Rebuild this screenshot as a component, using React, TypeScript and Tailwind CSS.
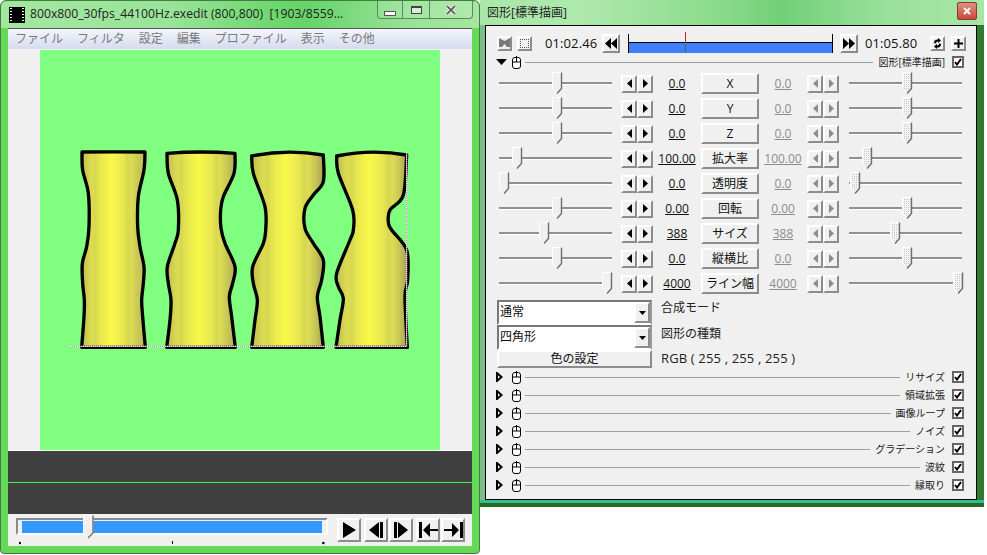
import React from "react";

const sans = "font-['Open_Sans','Noto_Sans_CJK_JP',sans-serif]";
const raised = "border-2 border-t-white border-l-white border-r-[#8c8c8c] border-b-[#8c8c8c] bg-[#f0f0f0]";

// contour of the vases, read off the reference (zoomed coords)
const vases: { left: number[][]; right: number[][]; fill: string; sag: number }[] = [
  {
    left: [[66, 36], [68, 90], [85, 160], [87, 260], [80, 320], [67, 370], [68, 430], [73, 480], [72, 530], [65, 622]],
    right: [[255, 36], [252, 90], [235, 170], [233, 260], [240, 320], [252, 380], [250, 430], [245, 480], [248, 530], [256, 622]],
    fill: "url(#vaseA)",
    sag: 35,
  },
  {
    left: [[321, 40], [325, 100], [352, 180], [355, 270], [345, 310], [322, 380], [325, 430], [333, 480], [330, 540], [320, 622]],
    right: [[525, 40], [522, 100], [490, 170], [482, 210], [483, 265], [495, 310], [525, 380], [518, 430], [508, 470], [515, 530], [526, 622]],
    fill: "url(#vaseB)",
    sag: 32,
  },
  {
    left: [[575, 48], [580, 100], [615, 200], [617, 270], [610, 310], [578, 380], [580, 430], [592, 480], [585, 540], [575, 622]],
    right: [[790, 45], [790, 125], [760, 165], [735, 205], [735, 265], [760, 310], [790, 360], [785, 420], [772, 470], [780, 530], [790, 622]],
    fill: "url(#vaseC)",
    sag: 26,
  },
  {
    left: [[830, 48], [835, 100], [878, 210], [880, 270], [870, 300], [830, 400], [835, 440], [850, 475], [840, 540], [828, 622]],
    right: [[1040, 45], [1030, 165], [990, 210], [985, 245], [995, 270], [1040, 330], [1043, 420], [1035, 470], [1042, 622]],
    fill: "url(#vaseD)",
    sag: 26,
  },
];

function smooth(pts: number[][]) {
  let d = "";
  for (let i = 0; i < pts.length - 1; i++) {
    const p0 = pts[Math.max(i - 1, 0)];
    const p1 = pts[i];
    const p2 = pts[i + 1];
    const p3 = pts[Math.min(i + 2, pts.length - 1)];
    const c1 = [p1[0] + (p2[0] - p0[0]) / 6, p1[1] + (p2[1] - p0[1]) / 6];
    const c2 = [p2[0] - (p3[0] - p1[0]) / 6, p2[1] - (p3[1] - p1[1]) / 6];
    d += `C${c1[0]} ${c1[1]} ${c2[0]} ${c2[1]} ${p2[0]} ${p2[1]}`;
  }
  return d;
}

function vasePath(left: number[][], right: number[][], sag: number) {
  const mid = (right[0][0] + left[0][0]) / 2;
  const bottom = left[left.length - 1];
  return `M${left[0][0]} ${left[0][1]}Q${mid} ${sag} ${right[0][0]} ${right[0][1]}` +
    smooth(right) + `L${bottom[0]} ${bottom[1]}` + smooth([...left].reverse()) + "Z";
}

function Grad({ id, end }: { id: string; end: string }) {
  return (
    <linearGradient id={id} x1="0" x2="1" y1="0" y2="0">
      <stop offset="0" stopColor="#bcbc55" />
      <stop offset="0.1" stopColor="#d2d250" />
      <stop offset="0.16" stopColor="#dcdc52" />
      <stop offset="0.22" stopColor="#d8d850" />
      <stop offset="0.3" stopColor="#e8e84e" />
      <stop offset="0.36" stopColor="#eeee4c" />
      <stop offset="0.46" stopColor="#f8f84a" />
      <stop offset="0.56" stopColor="#f0f04e" />
      <stop offset="0.66" stopColor="#e6e650" />
      <stop offset="0.72" stopColor="#d8d850" />
      <stop offset="0.78" stopColor="#dcdc54" />
      <stop offset="0.86" stopColor="#cccc55" />
      <stop offset="1" stopColor={end} />
    </linearGradient>
  );
}

function Vases() {
  return (
    <svg width="400" height="400" viewBox="-60 -270 1200 1200" className="block">
      <defs>
        <Grad id="vaseA" end="#bcbc58" />
        <Grad id="vaseB" end="#b0ae58" />
        <Grad id="vaseC" end="#a6a058" />
        <Grad id="vaseD" end="#a09a58" />
      </defs>
      {vases.map((v, i) => (
        <path key={i} d={vasePath(v.left, v.right, v.sag)} fill={v.fill} stroke="#000" strokeWidth="10" strokeLinejoin="round" />
      ))}
      <path d="M27 619H1040V40" fill="none" stroke="#d080c8" strokeWidth="3" />
      <path d="M27 619H1040V40" fill="none" stroke="#fff" strokeWidth="3" strokeDasharray="3 3" />
    </svg>
  );
}

function Btn({ className, children }: { className: string; children?: React.ReactNode }) {
  return <div className={`flex items-center justify-center ${raised} ${className}`}>{children}</div>;
}

function Tri({ d, w = 12, h = 12, fill = "#000" }: { d: string; w?: number; h?: number; fill?: string }) {
  return (
    <svg width={w} height={h} viewBox={`0 0 ${w} ${h}`}>
      <path d={d} fill={fill} />
    </svg>
  );
}

function Arrows({ off }: { off?: boolean }) {
  const c = off ? "#8c8c8c" : "#000";
  return (
    <div className="flex w-[32px] shrink-0">
      <Btn className="w-[16px] h-[18px]"><Tri w={5} h={9} d="M5 0V9L0 4.5Z" fill={c} /></Btn>
      <Btn className="w-[16px] h-[18px]"><Tri w={5} h={9} d="M0 0V9L5 4.5Z" fill={c} /></Btn>
    </div>
  );
}

function Slider({ pos, off }: { pos: number; off?: boolean }) {
  return (
    <div className="relative w-[113px] h-[23px] shrink-0">
      <div className="absolute left-0 right-0 top-[10px] h-[3px] bg-[#909090] border-b border-white" />
      <svg className="absolute top-0" style={{ left: pos }} width="11" height="23" viewBox="0 0 11 23">
        <defs>
          <pattern id="dither" width="2" height="2" patternUnits="userSpaceOnUse">
            <rect width="2" height="2" fill="#f4f4f4" />
            <rect width="1" height="1" fill="#c8c8c8" />
          </pattern>
        </defs>
        <path d="M0.5 0.5H9.5V16.5L5 21.5L0.5 16.5Z" fill={off ? "url(#dither)" : "#f0f0f0"} stroke="#fff" />
        <path d="M9.5 0.5V16.5L5 21.5" fill="none" stroke="#6e6e6e" strokeWidth="1.4" />
      </svg>
    </div>
  );
}

const rows = [
  { pos: 53, rpos: 53, val: "0.0", name: "X" },
  { pos: 53, rpos: 53, val: "0.0", name: "Y" },
  { pos: 53, rpos: 53, val: "0.0", name: "Z" },
  { pos: 13, rpos: 13, val: "100.00", name: "拡大率" },
  { pos: 0, rpos: 1, val: "0.0", name: "透明度" },
  { pos: 53, rpos: 53, val: "0.00", name: "回転" },
  { pos: 40, rpos: 41, val: "388", name: "サイズ" },
  { pos: 53, rpos: 53, val: "0.0", name: "縦横比" },
  { pos: 103, rpos: 104, val: "4000", name: "ライン幅" },
];

const sections = ["リサイズ", "領域拡張", "画像ループ", "ノイズ", "グラデーション", "波紋", "縁取り"];

function Mouse() {
  return (
    <svg width="10" height="13" viewBox="0 0 10 13" className="ml-[5px] shrink-0">
      <rect x="0.5" y="1.5" width="8" height="11" rx="2.5" fill="#fff" stroke="#000" />
      <path d="M4.5 0V6M0.5 6H8.5" stroke="#000" fill="none" />
    </svg>
  );
}

function Check() {
  return (
    <div className="ml-[7px] w-[12px] h-[12px] shrink-0 border-2 border-[#666] bg-white flex items-center justify-center">
      <svg width="8" height="8" viewBox="0 0 8 8">
        <path d="M1 4L3 6.5L7 1" fill="none" stroke="#000" strokeWidth="2" />
      </svg>
    </div>
  );
}

function Section({ label, open }: { label: string; open?: boolean }) {
  return (
    <div className="flex items-center h-[18px] pl-[9px] pr-[12px]">
      <div className="w-[12px] shrink-0 flex justify-center">
        {open ? (
          <Tri w={11} h={6} d="M0 0H11L5.5 6Z" />
        ) : (
          <svg width="7" height="10" viewBox="0 0 7 10" className="mr-[4px]">
            <path d="M1 1V9L5.5 5Z" fill="#f0f0f0" stroke="#000" strokeWidth="2" />
          </svg>
        )}
      </div>
      <Mouse />
      <div className="ml-[3px] flex-1 h-[1px] bg-[#a0a0a0]" />
      <span className="ml-[5px] text-[10px] leading-none text-[#222] whitespace-nowrap">{label}</span>
      <Check />
    </div>
  );
}

function Select({ text }: { text: string }) {
  return (
    <div className="flex w-[155px] h-[25px] border-2 border-t-[#777] border-l-[#777] border-r-[#999] border-b-white bg-white">
      <span className="flex-1 pl-[1px] text-[12px] leading-[20px] text-[#111]">{text}</span>
      <Btn className="w-[16px]"><Tri w={7} h={4} d="M0 0H7L3.5 4Z" /></Btn>
    </div>
  );
}

function PlayerButtons() {
  return (
    <div className="flex ml-[9px] mt-[4px]">
      <Btn className="w-[24px] h-[24px]"><Tri w={14} h={16} d="M1 0V16L14 8Z" /></Btn>
      <Btn className="w-[24px] h-[24px] ml-[3px]"><Tri w={14} h={16} d="M10 0V16L0 8ZM11 0H14V16H11Z" /></Btn>
      <Btn className="w-[24px] h-[24px] ml-[1px]"><Tri w={14} h={16} d="M0 0H3V16H0ZM4 0V16L14 8Z" /></Btn>
      <Btn className="w-[24px] h-[24px] ml-[3px]"><Tri w={19} h={16} d="M0 0H3V16H0ZM4 8L11 1V7H19V9H11V15Z" /></Btn>
      <Btn className="w-[24px] h-[24px] ml-[1px]"><Tri w={19} h={16} d="M16 0H19V16H16ZM15 8L8 1V7H0V9H8V15Z" /></Btn>
    </div>
  );
}

function LeftWindow() {
  return (
    <div className="flex flex-col w-[480px] h-[554px] shrink-0 rounded-t-[6px] rounded-b-[4px] border border-[#3f7f3f] bg-[#66d858]">
      <div className="relative flex items-center h-[27px] shrink-0 pl-[8px] rounded-t-[6px] bg-[linear-gradient(90deg,#a4e6a0_0%,#9ae49a_35%,#6cd66c_58%,#66d468_64%,#98e298_85%,#a6e6a2_100%)]">
        <svg width="16" height="16" viewBox="0 0 16 16" className="shrink-0">
          <rect width="16" height="16" fill="#000" />
          <path d="M1 1.5H3M1 4.5H3M1 7.5H3M1 10.5H3M1 13.5H3M13 1.5H15M13 4.5H15M13 7.5H15M13 10.5H15M13 13.5H15" stroke="#fff" />
        </svg>
        <span className="ml-[5px] text-[12.2px] text-[#222] whitespace-pre">800x800_30fps_44100Hz.exedit (800,800)  [1903/8559...</span>
        <div className="absolute top-0 left-[376px] flex w-[96px] h-[18px] border border-t-0 border-[#5a8a5a] rounded-b-[4px] bg-white/10">
          <div className="flex w-[25px] items-center justify-center border-r border-[#5a8a5a]">
            <div className="w-[12px] h-[5px] mt-[7px] border border-[#555] bg-white" />
          </div>
          <div className="flex w-[27px] items-center justify-center border-r border-[#5a8a5a]">
            <div className="w-[11px] h-[8px] border border-t-2 border-[#444] bg-white/50" />
          </div>
          <div className="flex flex-1 items-center justify-center">
            <svg width="12" height="10" viewBox="0 0 12 10">
              <path d="M2 1L10 9M10 1L2 9" stroke="#fff" strokeWidth="3.5" />
              <path d="M2 1L10 9M10 1L2 9" stroke="#666" strokeWidth="2" />
            </svg>
          </div>
        </div>
      </div>
      <div className="flex flex-col mx-[7px] h-[518px] border-t border-[#555] bg-[#f0f0f0]">
        <div className="flex gap-[14px] h-[20px] shrink-0 pl-[7px] items-center text-[12px] text-[#7a7a7a] bg-[linear-gradient(180deg,#f4f6fc,#d6dbef)]">
          {["ファイル", "フィルタ", "設定", "編集", "プロファイル", "表示", "その他"].map((m) => (
            <span key={m}>{m}</span>
          ))}
        </div>
        <div className="h-[402px] shrink-0 pt-[1px] border-b border-white">
          <div className="mx-auto w-[400px] h-[400px] bg-[#80ff80]">
            <Vases />
          </div>
        </div>
        <div className="flex flex-col justify-center h-[63px] shrink-0 bg-[#404040]">
          <div className="h-[1px] mb-[1px] bg-[#33ff33]" />
        </div>
        <div className="flex flex-1 items-start pl-[8px]">
          <div className="relative mt-[4px] w-[312px] h-[17px] border-2 border-t-[#8c8c8c] border-l-[#8c8c8c] border-r-white border-b-white p-[1px] px-[4px]">
            <div className="h-[12px] bg-[#3399ff]" />
            <svg className="absolute left-[65px] top-[-5px]" width="11" height="24" viewBox="0 0 11 24">
              <path d="M0.5 0.5H10V18L5 23L0.5 18Z" fill="#f0f0f0" stroke="#fff" />
              <path d="M10 0.5V18L5 23" fill="none" stroke="#6e6e6e" strokeWidth="1.4" />
            </svg>
            <svg className="absolute left-[1px] top-[21px]" width="310" height="4" viewBox="0 0 310 4">
              <path d="M2 2L0 1V3ZM303 2L305 1V3Z" stroke="#000" fill="#000" />
              <path d="M153.500 0V3" stroke="#000" />
            </svg>
          </div>
          <PlayerButtons />
        </div>
      </div>
    </div>
  );
}

function RightWindow() {
  return (
    <div className="flex flex-col w-[504px] h-[507px] shrink-0 rounded-t-[4px] bg-[linear-gradient(90deg,#7fbd8c_0%,#77b888_60%,#2f7a2f_100%)]">
      <div className="flex items-center justify-between h-[25px] shrink-0 pl-[7px] pr-[7px] bg-[linear-gradient(90deg,#a8e8a8_0%,#aee8ac_20%,#8edc8e_45%,#72d078_60%,#98e09a_80%,#a8e6a6_100%)]">
        <span className="text-[12px] text-[#222] whitespace-nowrap">図形[標準描画]</span>
        <div className="flex items-center justify-center w-[20px] h-[18px] -mt-[3px] border border-[#8a3a30] rounded-[2px] bg-[linear-gradient(180deg,#e09080,#c84a38)]">
          <svg width="8" height="8" viewBox="0 0 8 8">
            <path d="M1 1L7 7M7 1L1 7" stroke="#fff" strokeWidth="2" />
          </svg>
        </div>
      </div>
      <div className="flex flex-col ml-[5px] w-[492px] h-[475px] shrink-0 border border-black bg-[#f0f0f0] text-[#111]">
        <div className="flex items-center h-[20px] mt-[7px] pl-[11px]">
          <Btn className="w-[15px] h-[15px]">
            <svg width="11" height="11" viewBox="0 0 11 11"><path d="M0 0L5.500 3L11 0V9H8L5.500 6L3 9H0Z" fill="#7a7a7a" /></svg>
          </Btn>
          <Btn className="w-[15px] h-[15px] ml-[5px]">
            <div className="w-[9px] h-[9px] border border-dotted border-[#555]" />
          </Btn>
          <span className="w-[57px] ml-[13px] text-[13px] leading-none tracking-[0.1px]">01:02.46</span>
          <Btn className="w-[18px] h-[19px]"><Tri w={12} h={11} d="M6 0V11L0 5.500ZM12 0V11L6 5.500Z" /></Btn>
          <div className="relative ml-[8px] w-[205px] h-[19px] border-x border-black">
            <div className="absolute left-0 right-0 top-[8px] h-[11px] border-t border-black bg-[#3f7fff]" />
            <div className="absolute left-[56px] -top-[2px] h-[11px] w-[1px] bg-[#d02020]" />
            <div className="absolute left-[56px] top-[9px] h-[10px] w-[1px] bg-[#2f7a4f]" />
          </div>
          <Btn className="w-[18px] h-[19px] ml-[7px]"><Tri w={12} h={11} d="M0 0V11L6 5.500ZM6 0V11L12 5.500Z" /></Btn>
          <span className="ml-[7px] w-[65px] text-[13px] leading-none tracking-[0.1px]">01:05.80</span>
          <Btn className="w-[15px] h-[15px]">
            <svg width="9" height="11" viewBox="0 0 9 11"><path d="M1 5C1 2 3 1.500 5 1.500V0L8 2.500L5 5V3.500C4 3.500 3 4 3 5.500ZM8 6C8 9 6 9.500 4 9.500V11L1 8.500L4 6V7.500C5 7.500 6 7 6 5.500Z" /></svg>
          </Btn>
          <Btn className="w-[15px] h-[15px] ml-[6px]">
            <svg width="9" height="9" viewBox="0 0 9 9"><path d="M3.500 0H5.500V3.500H9V5.500H5.500V9H3.500V5.500H0V3.500H3.500Z" /></svg>
          </Btn>
        </div>
        <Section label="図形[標準描画]" open />
        {rows.map((r) => (
          <div key={r.name} className={`flex items-center h-[25px] pl-[13px] text-[12px] ${sans}`}>
            <Slider pos={r.pos} />
            <div className="w-[9px] shrink-0" />
            <Arrows />
            <span className="w-[48px] shrink-0 text-center underline">{r.val}</span>
            <Btn className="w-[58px] h-[21px] shrink-0 text-[12px] leading-none">{r.name}</Btn>
            <span className="w-[48px] shrink-0 text-center underline text-[#8c8c8c]">{r.val}</span>
            <Arrows off />
            <div className="w-[10px] shrink-0" />
            <Slider pos={r.rpos} off />
          </div>
        ))}
        <div className="flex mt-[4px] pl-[11px]">
          <div className="flex flex-col w-[155px]">
            <Select text="通常" />
            <Select text="四角形" />
            <Btn className="h-[18px] text-[12px] leading-none">色の設定</Btn>
          </div>
          <div className={`flex flex-col ml-[9px] text-[12px] text-[#222] ${sans}`}>
            <span className="h-[25px] leading-[15px]">合成モード</span>
            <span className="h-[25px] leading-[17px]">図形の種類</span>
            <span className="text-[13px] leading-[16px] tracking-[0.15px] whitespace-pre">RGB ( 255 , 255 , 255 )</span>
          </div>
        </div>
        <div>
          {sections.map((s) => (
            <Section key={s} label={s} />
          ))}
        </div>
      </div>
      <div className="h-[3px] bg-[#2fbf9c]" />
      <div className="flex-1 bg-[#2a6a1e]" />
    </div>
  );
}

export default function App() {
  return (
    <div className={`flex items-start w-[987px] h-[555px] overflow-hidden bg-white ${sans}`}>
      <LeftWindow />
      <RightWindow />
    </div>
  );
}
